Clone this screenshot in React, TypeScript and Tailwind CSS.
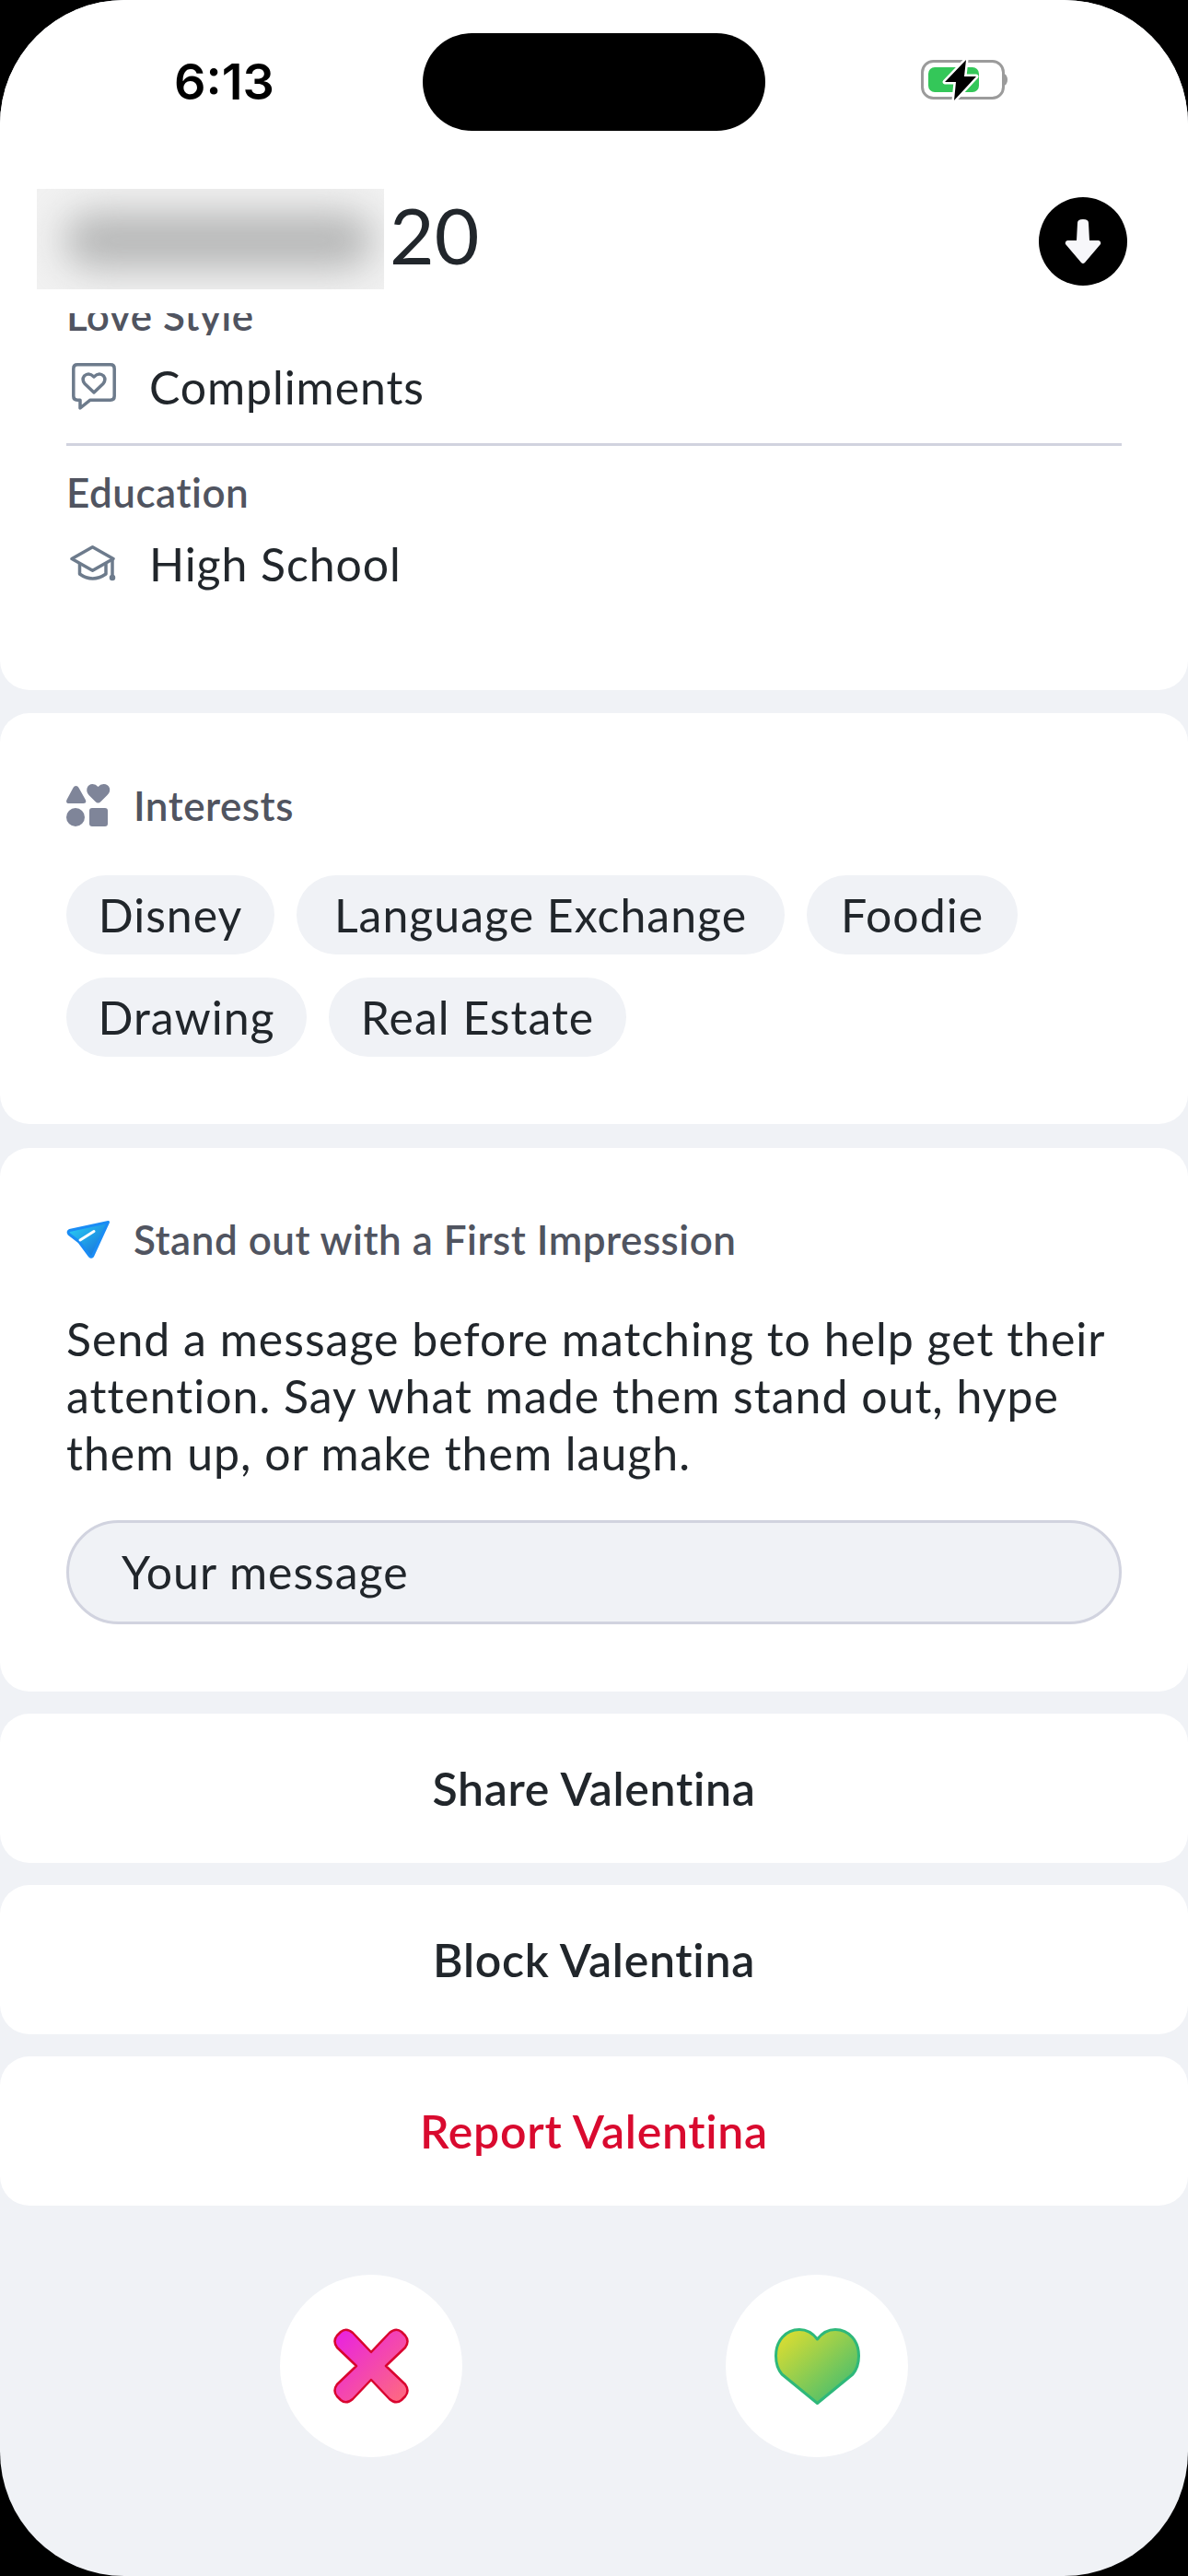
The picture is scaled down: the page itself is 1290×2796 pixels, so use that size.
const pills = [
  [
    { label: "Disney", width: "w-[226px]" },
    { label: "Language Exchange", width: "w-[530px]" },
    { label: "Foodie", width: "w-[229px]" },
  ],
  [
    { label: "Drawing", width: "w-[261px]" },
    { label: "Real Estate", width: "w-[323px]" },
  ],
];

function Battery() {
  return (
    <svg width="100" height="50" viewBox="0 0 100 50">
      <rect x="1.5" y="4.5" width="88" height="40" rx="12" fill="none" stroke="#9b9b9b" strokeWidth="3" />
      <path d="M90.5 18 C93 19 94 22 94 24.5 C94 27 93 30 90.5 31 Z" fill="#9b9b9b" />
      <rect x="8" y="11" width="55" height="27" rx="7" fill="#34c759" />
      <path
        d="M49 3 L26 27 L38 27 L36 47 L60 21 L47 21 Z"
        fill="#000"
        stroke="#fff"
        strokeWidth="5"
        strokeLinejoin="round"
        paintOrder="stroke"
      />
    </svg>
  );
}

function ComplimentsIcon() {
  return (
    <svg width="48" height="52" viewBox="0 0 48 52" fill="none" stroke="#6d7b8c" strokeWidth="3.5" strokeLinejoin="round">
      <path d="M6 1.8 H42 Q46.2 1.8 46.2 6 V36 Q46.2 40.2 42 40.2 H20 L9 49 V40.2 H6 Q1.8 40.2 1.8 36 V6 Q1.8 1.8 6 1.8 Z" />
      <path d="M24 32 L14 22.5 Q10.5 18 13.5 14 Q18.5 9.5 24 15 Q29.5 9.5 34.5 14 Q37.5 18 34 22.5 Z" />
    </svg>
  );
}

function EducationIcon() {
  return (
    <svg width="50" height="40" viewBox="0 0 50 40" fill="none" stroke="#6d7b8c" strokeWidth="3.5" strokeLinejoin="round" strokeLinecap="round">
      <path d="M24.5 1.8 L47 14.5 L24.5 27.2 L2 14.5 Z" />
      <path d="M10.5 20 V31 Q24.5 41 39 31 V20" />
      <path d="M46 16 V33" />
      <circle cx="46" cy="35" r="1.5" fill="#6d7b8c" />
    </svg>
  );
}

function InterestsIcon() {
  return (
    <svg width="48" height="47" viewBox="0 0 48 47" fill="#7f8599">
      <path d="M10.5 2 Q12.5 2 13.5 4 L20.8 17 Q22.5 21 18.5 21 H3 Q-1 21 0.5 17 L7.5 4 Q8.5 2 10.5 2 Z" />
      <path d="M34.5 20.5 Q33 20.5 31.5 19 L24.5 12 Q21.5 8.5 22.5 4.5 Q24 0 28.5 0 Q32 0 34.5 3 Q37 0 40.5 0 Q45.5 0 47 4.5 Q48 8.5 44.5 12 L37.5 19 Q36 20.5 34.5 20.5 Z" />
      <circle cx="10" cy="36" r="10" />
      <rect x="25" y="26" width="20" height="20" rx="3" />
    </svg>
  );
}

function PlaneIcon() {
  return (
    <svg width="48" height="42" viewBox="0 0 48 42">
      <defs>
        <linearGradient id="plane" x1="0" y1="0" x2="1" y2="1">
          <stop offset="0" stopColor="#2bd4f4" />
          <stop offset="1" stopColor="#1565d8" />
        </linearGradient>
      </defs>
      <path
        d="M45.5 2.5 L28.5 39.5 Q27 41 25.5 39.5 L14 24 L3 15.5 Q1 13 3.5 11.5 Z"
        fill="url(#plane)"
        stroke="#1a8cf5"
        strokeWidth="3"
        strokeLinejoin="round"
      />
      <path d="M30 12.5 L15 22" stroke="#fff" strokeWidth="3" strokeLinecap="round" />
    </svg>
  );
}

function NopeIcon() {
  return (
    <svg width="84" height="84" viewBox="-2 -2 84 84">
      <defs>
        <linearGradient id="nope" x1="0" y1="0" x2="1" y2="1">
          <stop offset="0" stopColor="#e81fe4" />
          <stop offset="1" stopColor="#ff6d7c" />
        </linearGradient>
      </defs>
      <path
        d="M40 25 L60 4 Q67 -2 73 3 L77 7 Q82 13 77 20 L56 40 L77 60 Q82 67 77 73 L73 77 Q67 82 60 76 L40 55 L20 76 Q13 82 7 77 L3 73 Q-2 67 3 60 L24 40 L3 20 Q-2 13 3 7 L7 3 Q13 -2 20 4 Z"
        fill="url(#nope)"
        stroke="#d9042f"
        strokeWidth="2.5"
        strokeLinejoin="round"
      />
    </svg>
  );
}

function LikeIcon() {
  return (
    <svg width="93" height="83" viewBox="0 0 93 83">
      <defs>
        <linearGradient id="like" x1="0" y1="0" x2="1" y2="1">
          <stop offset="0" stopColor="#e8e02c" />
          <stop offset="1" stopColor="#2fb878" />
        </linearGradient>
      </defs>
      <path
        d="M46.5 12 C51 6 57 1.5 66 1.5 C81 1.5 91.5 14 91.5 30 C91.5 38 90 44 85 50 L46.5 81.5 L8 50 C3 44 1.5 38 1.5 30 C1.5 14 12 1.5 27 1.5 C36 1.5 42 6 46.5 12 Z"
        fill="url(#like)"
        stroke="#2eb87a"
        strokeWidth="3"
        strokeLinejoin="round"
      />
    </svg>
  );
}

function ActionRow({ label, danger }: { label: string; danger?: boolean }) {
  return (
    <button
      className={`h-[162px] w-full rounded-[32px] bg-white text-[50px] font-semibold tracking-[0.7px] ${
        danger ? "text-[#d90a2f]" : "text-[#21262b]"
      }`}
    >
      {label}
    </button>
  );
}

export default function App() {
  return (
    <div className="h-[2796px] w-[1290px] bg-black font-['Lato',sans-serif] text-[#21262b]">
      <div className="flex h-full flex-col overflow-hidden rounded-[135px] bg-[#f0f2f6]">
        {/* status bar */}
        <div className="bg-white">
          <div className="flex h-[178px] items-start pl-[189px] pt-[36px]">
            <span className="mt-[18px] w-[270px] font-['Inter',sans-serif] text-[54px] font-semibold leading-[70px] text-black">
              6:13
            </span>
            <div className="h-[106px] w-[372px] rounded-[53px] bg-black" />
            <div className="ml-[169px] mt-[26px]">
              <Battery />
            </div>
          </div>

          {/* name row */}
          <div className="flex h-[162px] items-start pl-[40px] pr-[66px] pt-[27px]">
            <div className="h-[109px] w-[377px] overflow-hidden bg-[#f1f1f1]">
              <div className="ml-[30px] mt-[26px] h-[60px] w-[335px] rounded-full bg-[#b6b7b7] blur-[20px]" />
            </div>
            <span className="ml-[6px] mt-[0px] text-[84px] font-normal leading-[100px]">20</span>
            <div className="ml-auto mt-[9px] flex h-[96px] w-[96px] items-center justify-center rounded-full bg-black">
              <svg width="40" height="50" viewBox="0 0 40 50" fill="#f7f7fa">
                <path d="M14 5 Q14 1 20 1 Q26 1 26 5 L27 24 L37 24 Q40 25 39 28 L22 48 Q20 50 18 48 L1 28 Q0 25 3 24 L13 24 Z" />
              </svg>
            </div>
          </div>
        </div>

        {/* love style / education */}
        <div className="rounded-b-[32px] bg-white px-[72px]">
          <div className="h-[24px] overflow-hidden">
            <p className="-mt-[28px] text-[44px] font-semibold leading-[60px] tracking-[0.5px] text-[#505460]">
              Love Style
            </p>
          </div>
          <div className="mt-[26px] flex h-[60px] items-center">
            <div className="ml-[6px] w-[84px]">
              <ComplimentsIcon />
            </div>
            <span className="text-[50px] leading-[60px] tracking-[0.9px]">Compliments</span>
          </div>
          <div className="mt-[31px] h-[3px] bg-[#d1d3df]" />
          <p className="mt-[20px] text-[44px] font-semibold leading-[60px] tracking-[0.5px] text-[#505460]">Education</p>
          <div className="mt-[20px] flex h-[60px] items-center pb-[4px]">
            <div className="ml-[4px] w-[86px]">
              <EducationIcon />
            </div>
            <span className="text-[50px] leading-[60px] tracking-[0.9px]">High School</span>
          </div>
          <div className="h-[105px]" />
        </div>

        {/* interests */}
        <div className="mt-[25px] h-[446px] rounded-[32px] bg-white px-[72px] pt-[75px]">
          <div className="flex h-[50px] items-center gap-[25px]">
            <InterestsIcon />
            <span className="text-[44px] font-semibold leading-[50px] tracking-[0.5px] text-[#505460]">Interests</span>
          </div>
          <div className="mt-[51px] flex flex-col gap-[25px]">
            {pills.map((row) => (
              <div key={row[0].label} className="flex gap-[24px]">
                {row.map((p) => (
                  <span
                    key={p.label}
                    className={`flex h-[86px] items-center justify-center rounded-full bg-[#f0f2f6] text-[50px] tracking-[1px] ${p.width}`}
                  >
                    {p.label}
                  </span>
                ))}
              </div>
            ))}
          </div>
        </div>

        {/* first impression */}
        <div className="mt-[26px] h-[590px] rounded-[32px] bg-white px-[72px] pt-[74px]">
          <div className="flex h-[50px] items-center gap-[25px]">
            <PlaneIcon />
            <span className="text-[44px] font-semibold leading-[50px] tracking-[0.5px] text-[#505460]">
              Stand out with a First Impression
            </span>
          </div>
          <p className="mt-[52px] text-[50px] leading-[62px] tracking-[1px]">
            Send a message before matching to help get their attention. Say what made them stand out, hype them up, or
            make them laugh.
          </p>
          <div className="mt-[42px] flex h-[113px] items-center rounded-full border-[3px] border-[#d1d3df] bg-[#f0f2f6] pl-[57px] text-[50px] tracking-[1px]">
            Your message
          </div>
        </div>

        <div className="mt-[24px] flex flex-col gap-[24px]">
          <ActionRow label="Share Valentina" />
          <ActionRow label="Block Valentina" />
          <ActionRow label="Report Valentina" danger />
        </div>

        {/* swipe buttons */}
        <div className="mt-[75px] flex justify-center gap-[286px]">
          <button className="flex h-[198px] w-[198px] items-center justify-center rounded-full bg-white">
            <NopeIcon />
          </button>
          <button className="flex h-[198px] w-[198px] items-center justify-center rounded-full bg-white">
            <LikeIcon />
          </button>
        </div>
      </div>
    </div>
  );
}
